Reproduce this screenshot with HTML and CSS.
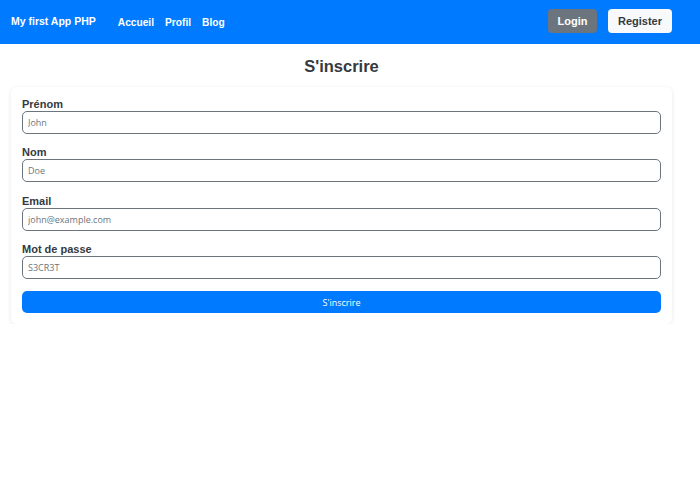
FILE: index.html
```html
<!DOCTYPE html>
<html lang="fr">
<head>
<meta charset="utf-8">
<title>S'inscrire</title>
<link rel="stylesheet" href="styles.css">
</head>
<body>
<nav class="navbar">
  <a class="brand" href="#">My first App PHP</a>
  <ul class="nav-links">
    <li><a href="#">Accueil</a></li>
    <li><a href="#">Profil</a></li>
    <li><a href="#">Blog</a></li>
  </ul>
  <div class="nav-actions">
    <a class="btn btn-login" href="#">Login</a>
    <a class="btn btn-register" href="#">Register</a>
  </div>
</nav>
<main class="container">
  <h1 class="title">S'inscrire</h1>
  <form class="card">
    <div class="field">
      <label for="prenom">Prénom</label>
      <input id="prenom" type="text" placeholder="John">
    </div>
    <div class="field">
      <label for="nom">Nom</label>
      <input id="nom" type="text" placeholder="Doe">
    </div>
    <div class="field">
      <label for="email">Email</label>
      <input id="email" type="email" placeholder="john@example.com">
    </div>
    <div class="field">
      <label for="pass">Mot de passe</label>
      <input id="pass" type="text" placeholder="S3CR3T">
    </div>
    <button type="submit" class="submit">S'inscrire</button>
  </form>
</main>
</body>
</html>
```
FILE: styles.css
```css
* { box-sizing: border-box; }
body {
  margin: 0;
  font-family: "Liberation Sans", Arial, sans-serif;
  background: #fff;
  color: #212529;
}
.navbar {
  height: 44px;
  background: #007bff;
  display: flex;
  align-items: center;
  padding: 0 28px 2px 11px;
}
.navbar a { text-decoration: none; }
.brand {
  color: #fff;
  font-weight: bold;
  font-size: 10.5px;
  margin-right: 22px;
}
.nav-links {
  list-style: none;
  display: flex;
  gap: 11px;
  margin: 0;
  padding: 0;
}
.nav-links a {
  color: #fff;
  font-weight: bold;
  font-size: 10.2px;
}
.nav-actions {
  margin-left: auto;
  display: flex;
  gap: 11px;
}
.btn {
  display: flex;
  align-items: center;
  justify-content: center;
  height: 24px;
  border-radius: 4px;
  font-size: 11px;
  font-weight: bold;
}
.btn-login {
  width: 49px;
  background: #6c757d;
  color: #fff;
}
.btn-register {
  width: 64px;
  background: #f8f9fa;
  color: #343a40;
}
.container {
  margin: 0 28px 0 11px;
}
.title {
  text-align: center;
  font-size: 16.5px;
  font-weight: bold;
  color: #343a40;
  margin: 12px 0 11px;
  line-height: 20px;
}
.card {
  background: #fff;
  border-radius: 6px;
  box-shadow: 0 1px 5px rgba(0,0,0,0.09);
  padding: 11px 11px 11px;
  display: flex;
  flex-direction: column;
}
.field {
  display: flex;
  flex-direction: column;
  margin-bottom: 12.33px;
}
label {
  font-size: 11px;
  font-weight: bold;
  color: #343a40;
  line-height: 13px;
}
input {
  height: 23px;
  border: 1px solid #6c757d;
  border-radius: 5px;
  padding: 0 5px;
  font-family: "Open Sans", sans-serif;
  font-size: 9px;
  color: #495057;
}
input::placeholder { color: #6c757d; }
.submit {
  height: 22px;
  border: none;
  border-radius: 5px;
  background: #007bff;
  color: #fff;
  font-family: "Open Sans", sans-serif;
  font-size: 9px;
}
```
